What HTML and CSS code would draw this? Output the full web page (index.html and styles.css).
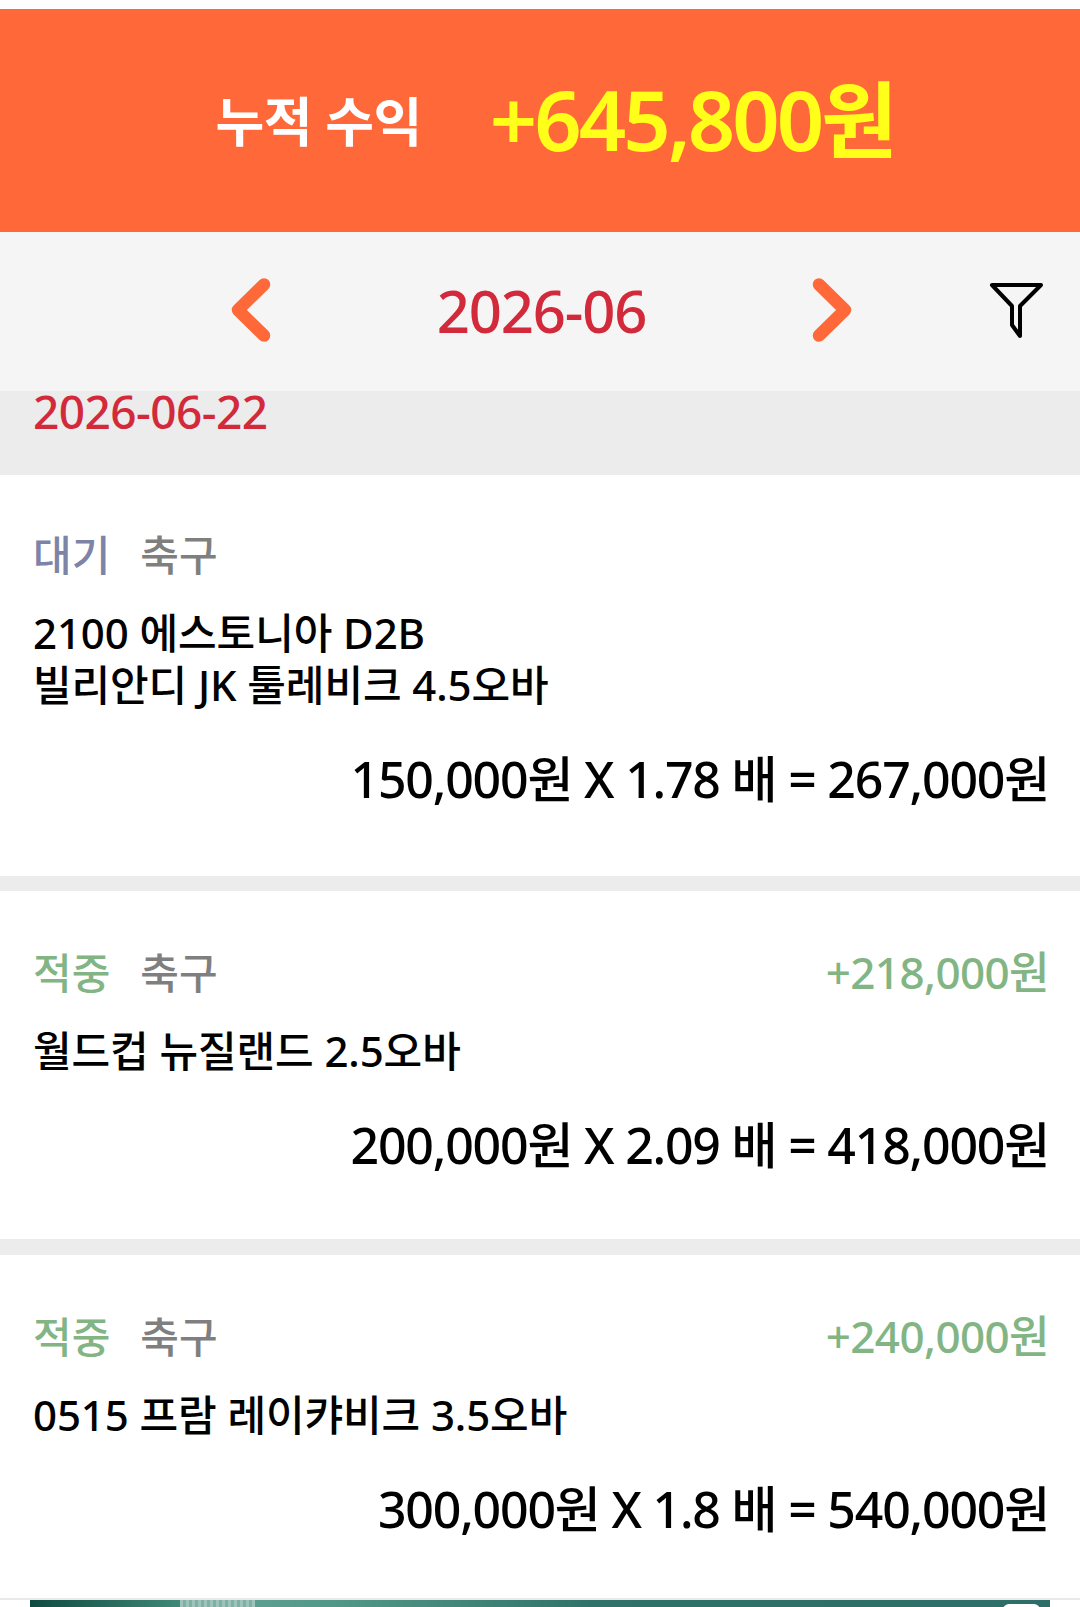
FILE: index.html
```html
<!DOCTYPE html>
<html lang="ko">
<head>
  <meta charset="UTF-8">
  <meta name="viewport" content="width=device-width, initial-scale=1.0">
  <title>누적 수익</title>
  <link rel="stylesheet" href="styles.css">
</head>
<body>
  <header class="summary">
    <span class="summary-label">누적 수익</span>
    <span class="summary-value">+645,800원</span>
  </header>

  <nav class="month-nav">
    <svg class="arrow" viewBox="0 0 40 64" aria-hidden="true"><path d="M33 6.5 L7 32 L33 57.5"/></svg>
    <span class="month">2026-06</span>
    <svg class="arrow" viewBox="0 0 40 64" aria-hidden="true"><path d="M7 6.5 L33 32 L7 57.5"/></svg>
    <svg class="filter" viewBox="0 0 56 60" aria-hidden="true"><path d="M3 3 H52 L31 24 V54 L23 43 V24 Z"/></svg>
  </nav>

  <div class="date-row">2026-06-22</div>

  <section class="card card-first">
    <div class="card-top">
      <div><span class="status status-wait">대기</span><span class="sport">축구</span></div>
    </div>
    <p class="match">2100 에스토니아 D2B<br>빌리안디 JK 툴레비크 4.5오바</p>
    <p class="calc">150,000원 X 1.78 배 = 267,000원</p>
  </section>

  <section class="card">
    <div class="card-top">
      <div><span class="status status-win">적중</span><span class="sport">축구</span></div>
      <span class="profit">+218,000원</span>
    </div>
    <p class="match">월드컵 뉴질랜드 2.5오바</p>
    <p class="calc">200,000원 X 2.09 배 = 418,000원</p>
  </section>

  <section class="card card-last">
    <div class="card-top">
      <div><span class="status status-win">적중</span><span class="sport">축구</span></div>
      <span class="profit">+240,000원</span>
    </div>
    <p class="match">0515 프람 레이캬비크 3.5오바</p>
    <p class="calc">300,000원 X 1.8 배 = 540,000원</p>
  </section>

  <div class="ad-slot">
    <div class="ad-banner"><span class="ad-button"></span></div>
  </div>
</body>
</html>
```

FILE: styles.css
```css
html, body {
  margin: 0;
  height: 1607px;
  overflow: hidden;
}

body {
  font-family: "Noto Sans", "Noto Sans CJK KR", sans-serif;
  font-weight: 500;
  background-color: #ececec;
  color: #000;
  border-top: 9px solid #fff;
  box-sizing: border-box;
}

p {
  margin: 0;
}

.summary {
  height: 223px;
  background-color: #ff693a;
  display: flex;
  justify-content: center;
  align-items: center;
  gap: 68px;
  padding-left: 30px;
  padding-bottom: 4px;
  box-sizing: border-box;
  font-weight: 600;
}

.summary-label {
  font-size: 53px;
  line-height: 70px;
  letter-spacing: -0.5px;
  margin-top: 6px;
  color: #fff;
}

.summary-value {
  font-size: 83px;
  line-height: 100px;
  letter-spacing: -3px;
  color: #ffff19;
}

.month-nav {
  height: 159px;
  background-color: #f5f5f5;
  position: relative;
  display: flex;
  justify-content: center;
  align-items: center;
  gap: 166px;
  padding-left: 3px;
  padding-bottom: 4px;
  box-sizing: border-box;
}

.month {
  font-size: 58px;
  line-height: 70px;
  letter-spacing: -1.2px;
  margin-bottom: -3px;
  color: #d32a3b;
}

.arrow {
  width: 40px;
  height: 64px;
  fill: none;
  stroke: #ff693a;
  stroke-width: 12.5;
  stroke-linecap: round;
  stroke-linejoin: round;
}

.filter {
  position: absolute;
  right: 35px;
  top: 50px;
  width: 56px;
  height: 60px;
  fill: none;
  stroke: #000;
  stroke-width: 4;
  stroke-linejoin: round;
}

.date-row {
  height: 84px;
  padding-left: 33px;
  font-size: 46px;
  line-height: 40px;
  letter-spacing: -0.55px;
  color: #d32a3b;
}

.card {
  background-color: #fff;
  height: 348px;
  margin-bottom: 16px;
  padding: 51px 31px 0 33px;
  box-sizing: border-box;
}

.card-first {
  height: 401px;
  margin-bottom: 15px;
  padding-top: 49px;
}

.card-last {
  height: 343px;
  margin-bottom: 0;
}

.card-top {
  display: flex;
  justify-content: space-between;
  align-items: center;
  height: 56px;
  font-size: 42px;
}

.status {
  margin-right: 30px;
}

.status-wait {
  color: #7d84a8;
}

.status-win {
  color: #83b584;
}

.sport {
  color: #7f7f7f;
}

.profit {
  font-size: 44px;
  letter-spacing: -0.6px;
  color: #83b584;
}

.match {
  margin-top: 27px;
  font-size: 42px;
  line-height: 52px;
  letter-spacing: -0.1px;
}

.calc {
  margin-top: 32px;
  text-align: right;
  font-size: 50px;
  line-height: 72px;
  letter-spacing: -1.2px;
}

.ad-slot {
  height: 9px;
  background-color: #fff;
  border-top: 2px solid #e6ebe9;
  padding: 0 30px;
  box-sizing: border-box;
}

.ad-banner {
  height: 7px;
  position: relative;
  overflow: hidden;
  background:
    repeating-linear-gradient(90deg, #9cc4ba 0, #9cc4ba 3px, #7fb0a4 3px, #7fb0a4 6px) 150px 0 / 75px 100% no-repeat,
    linear-gradient(90deg, #0f4a40 0, #3f8878 14.7%, #5a9f90 22%, #4f9585 32%, #2f7269 55%, #2d6f68 100%);
}

.ad-button {
  position: absolute;
  right: 10px;
  top: 4px;
  width: 37px;
  height: 12px;
  border-radius: 6px;
  background-color: #fff;
}
```
